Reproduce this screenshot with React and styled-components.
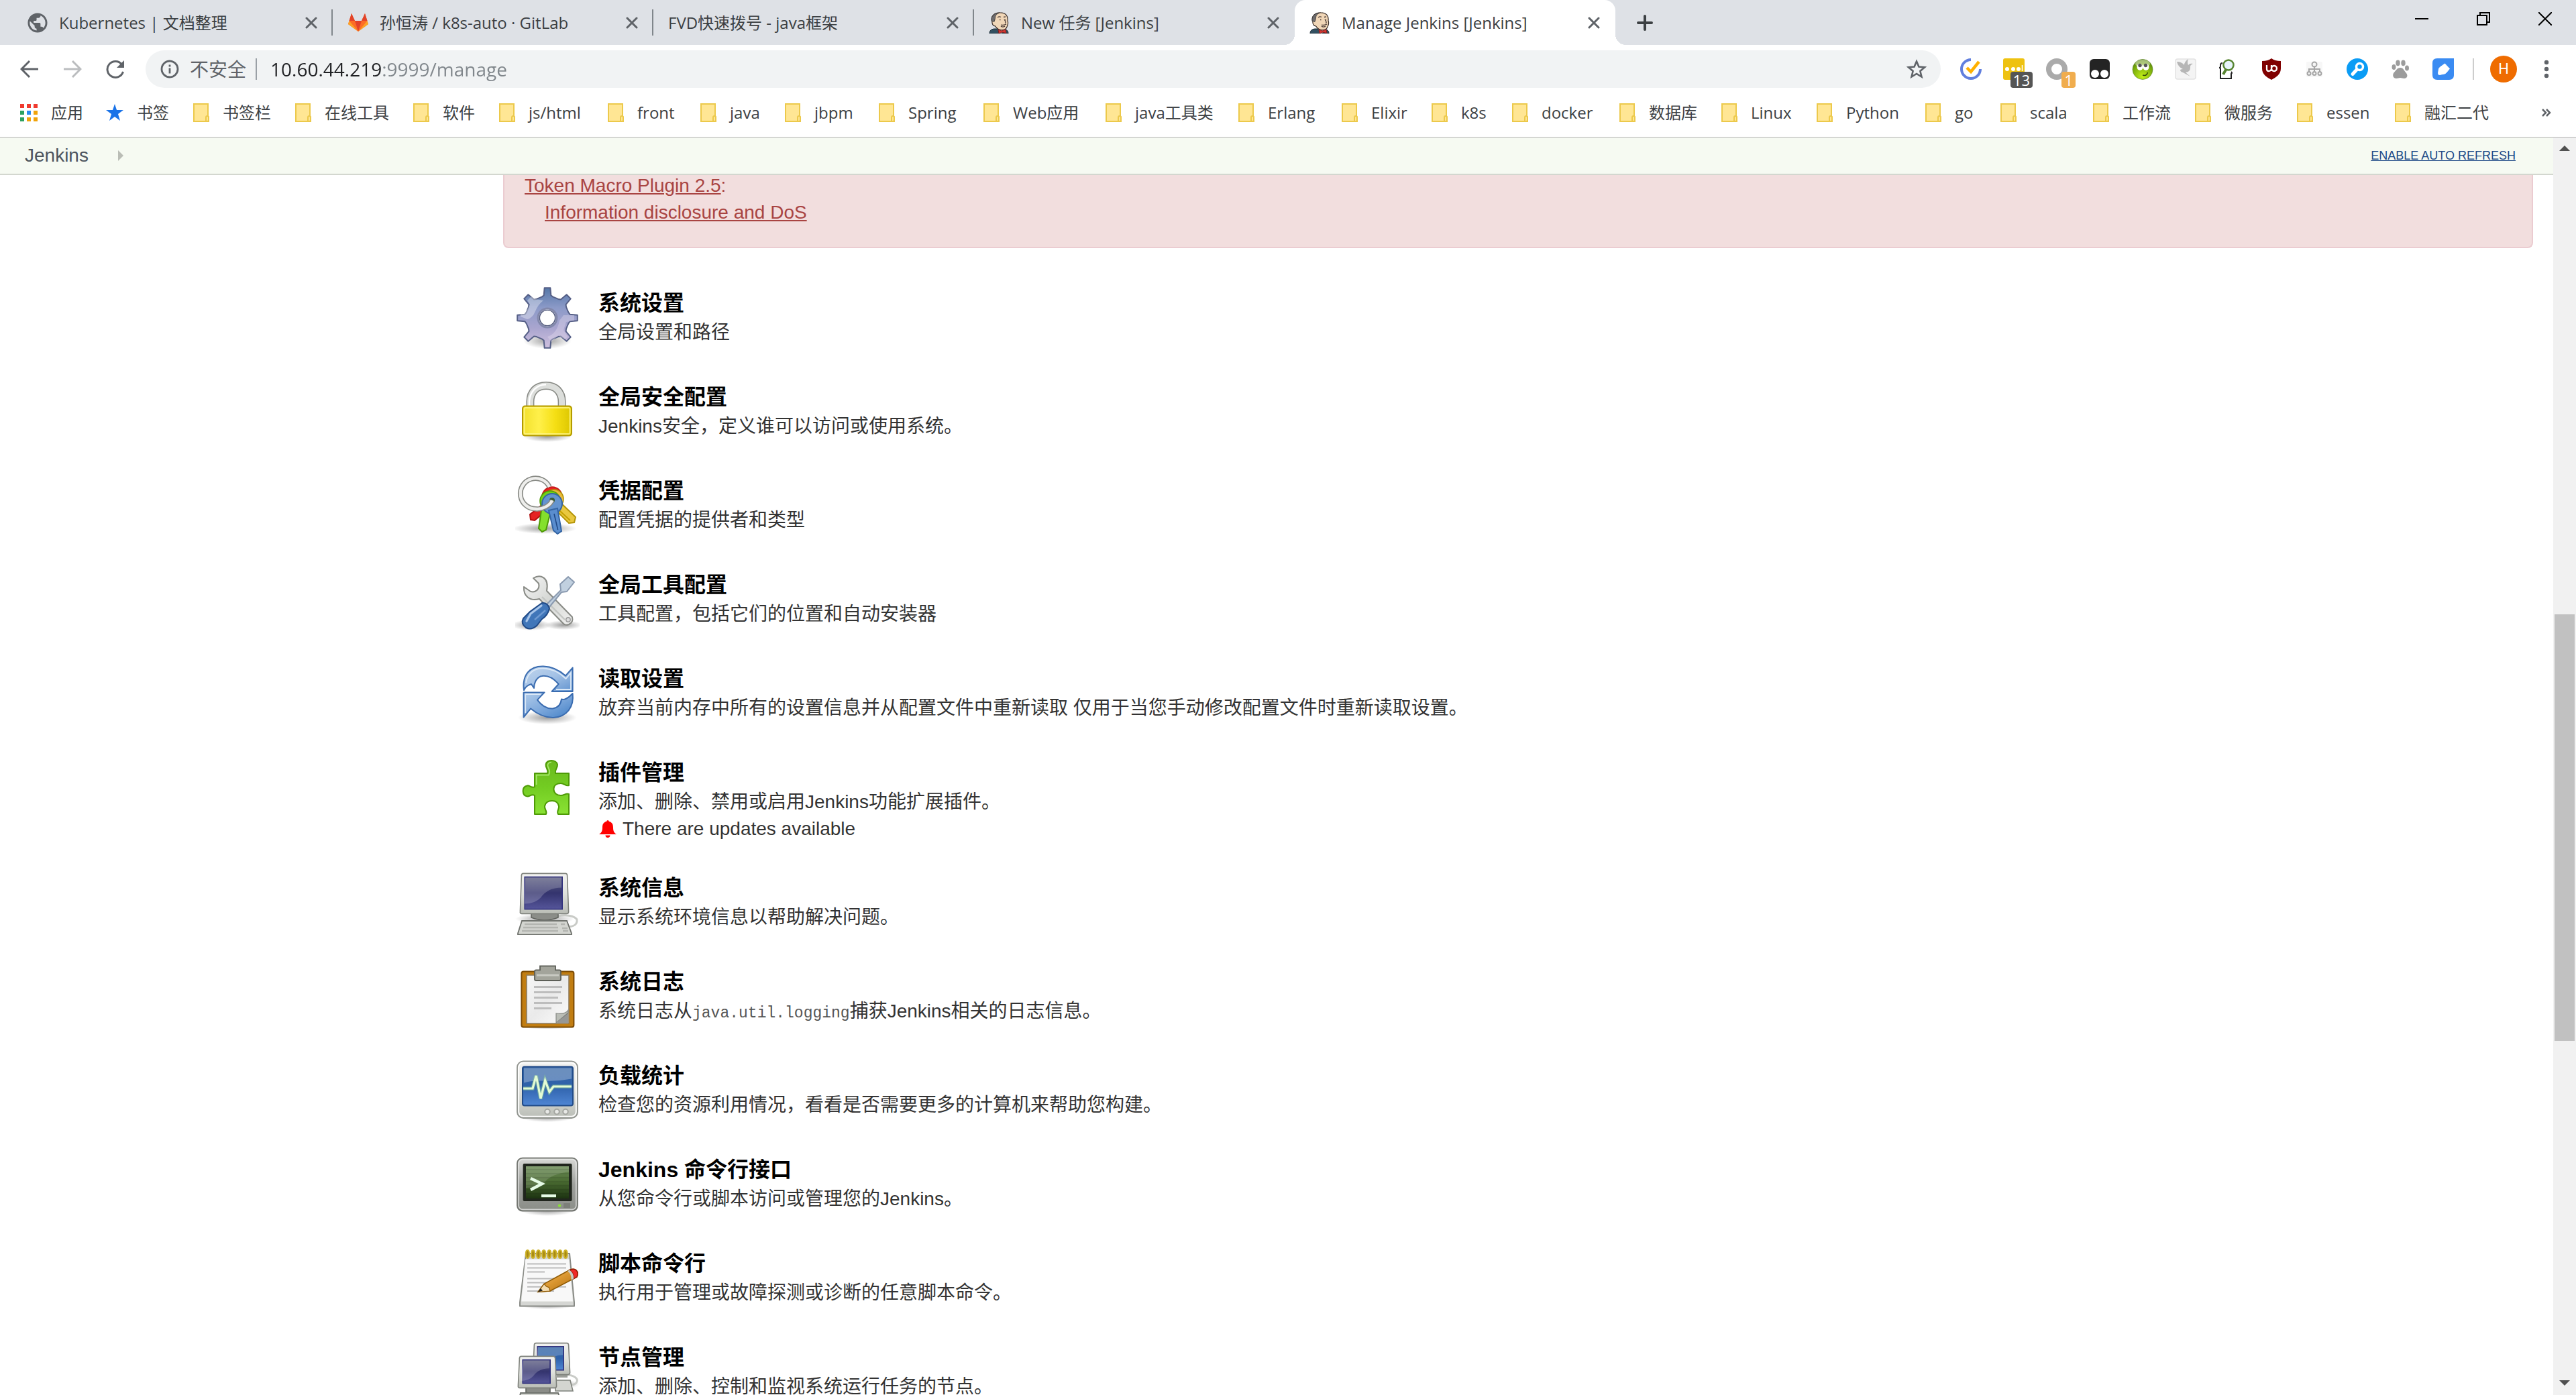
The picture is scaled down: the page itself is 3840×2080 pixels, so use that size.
import React from "react";
import styled, { createGlobalStyle } from "styled-components";

const uiFont = `"Open Sans", "Noto Sans", "Noto Sans CJK SC", sans-serif`;
const pageFont = `"Liberation Sans", "Noto Sans CJK SC", sans-serif`;

const GlobalStyle = createGlobalStyle`
  *, *::before, *::after { box-sizing: border-box; }
  body { margin: 0; background: #fff; overflow: hidden; }
  button { border: 0; padding: 0; margin: 0; background: none; font: inherit; color: inherit; cursor: pointer; }
  svg { display: block; flex: none; }
`;

const Browser = styled.div`
  display: flex;
  flex-direction: column;
  height: 100vh;
  font-family: ${uiFont};
  font-size: 24px;
  color: #3c4043;
`;

/* ---------- tab strip ---------- */
const TabStrip = styled.div`
  display: flex;
  flex: none;
  height: 67px;
  padding-left: 18px;
  background: #dee1e6;
`;

const Tab = styled.div`
  position: relative;
  display: flex;
  align-items: center;
  gap: 16px;
  width: 478px;
  padding: 0 16px 0 22px;
  background: ${(p) => (p.$active ? "#fff" : "transparent")};
  border-radius: ${(p) => (p.$active ? "16px 16px 0 0" : "0")};

  &::before {
    content: "";
    position: absolute;
    display: ${(p) => (p.$active ? "block" : "none")};
    left: -16px;
    right: -16px;
    bottom: 0;
    height: 16px;
    background:
      radial-gradient(circle at 0 0, transparent 16px, #fff 16px) left / 16px 16px no-repeat,
      radial-gradient(circle at 100% 0, transparent 16px, #fff 16px) right / 16px 16px no-repeat;
  }

  &::after {
    content: "";
    position: absolute;
    display: ${(p) => (p.$divider ? "block" : "none")};
    right: 0;
    top: 14px;
    width: 2px;
    height: 39px;
    background: #80868b;
  }
`;

const TabTitle = styled.button`
  flex: 1;
  text-align: left;
  line-height: 36px;
  white-space: nowrap;
`;

const IconButton = styled.button`
  display: flex;
  align-items: center;
  justify-content: center;
  flex: none;
  width: ${(p) => p.$w || 32}px;
  height: ${(p) => p.$h || 32}px;
`;

const NewTab = styled(IconButton)`
  align-self: center;
  margin-left: 12px;
`;

const WindowButtons = styled.div`
  display: flex;
  margin-left: auto;
`;

/* ---------- toolbar ---------- */
const Toolbar = styled.div`
  display: flex;
  align-items: center;
  flex: none;
  height: 72px;
  padding: 0 20px 0 12px;
`;

const NavButtons = styled.div`
  display: flex;
  width: 205px;
`;

const Omnibox = styled.div`
  display: flex;
  align-items: center;
  flex: 1;
  height: 56px;
  padding: 0 16px 0 22px;
  border-radius: 28px;
  background: #f1f3f4;
  font-size: 28px;
`;

const Security = styled.button`
  display: flex;
  align-items: center;
  gap: 16px;
  padding-right: 14px;
  margin-right: 20px;
  border-right: 2px solid #9aa0a6;
  line-height: 32px;
  color: #5f6368;
`;

const Address = styled.input`
  flex: 1;
  min-width: 0;
  border: 0;
  padding: 0;
  outline: 0;
  font: 28px/40px ${uiFont};
  color: transparent;
  background: linear-gradient(90deg, #202124 167px, #80868b 167px);
  background-clip: text;
  -webkit-background-clip: text;
`;

const Extensions = styled.div`
  display: flex;
  gap: 32px;
  margin-left: 29px;
  padding-right: 28px;
  border-right: 2px solid #cdcdcd;
`;

const Extension = styled(IconButton)`
  position: relative;
`;

const Badge = styled.span`
  position: absolute;
  top: 20px;
  right: -12px;
  padding: 0 4px;
  border-radius: 4px;
  background: ${(p) => p.$bg};
  color: #fff;
  font-size: 22px;
  line-height: 24px;
`;

const Avatar = styled.button`
  width: 40px;
  height: 40px;
  margin: 0 20px 0 24px;
  border-radius: 50%;
  background: #ef6c00;
  color: #fff;
  font: 22px/40px Roboto, sans-serif;
`;

/* ---------- bookmarks ---------- */
const Bookmarks = styled.nav`
  display: flex;
  align-items: center;
  flex: none;
  height: 66px;
  padding: 0 28px 8px 30px;
  border-bottom: 1px solid #b0b0b0;
`;

const Bookmark = styled.a`
  display: flex;
  align-items: center;
  gap: 20px;
  width: ${(p) => p.$w}px;
  line-height: 36px;
  color: inherit;
  text-decoration: none;
  white-space: nowrap;
`;

const MoreBookmarks = styled(IconButton)`
  margin-left: auto;
`;

/* ---------- page ---------- */
const Viewport = styled.div`
  display: flex;
  flex: 1;
  min-height: 0;
  font-family: ${pageFont};
  font-size: 28px;
  line-height: 40px;
  color: #333;
`;

const Page = styled.div`
  display: flex;
  flex-direction: column;
  flex: 1;
  min-width: 0;
  overflow: hidden;
`;

const Breadcrumbs = styled.header`
  display: flex;
  align-items: center;
  flex: none;
  height: 56px;
  padding: 0 56px 0 37px;
  background: #f6faf2;
  border-bottom: 2px solid #d3d7cf;
`;

const Crumb = styled.a`
  margin-right: 43px;
  color: #4d545d;
  text-decoration: none;
`;

const AutoRefresh = styled.a`
  margin-left: auto;
  color: #204a87;
  font-size: 18px;
`;

const Main = styled.main`
  flex: 1;
  min-height: 0;
  overflow: hidden;
  padding: 0 30px 0 750px;
`;

const Alert = styled.dl`
  margin: -4px 0 56px;
  padding: 0 30px 31px;
  border: 2px solid #ebccd1;
  border-top: 0;
  border-radius: 0 0 8px 8px;
  background: #f2dede;
  color: #a94442;

  dd { margin: 0 0 0 30px; }
  a { color: inherit; }
`;

const Items = styled.ul`
  margin: 0;
  padding: 0 0 0 18px;
  list-style: none;
`;

const Item = styled.li`
  display: flex;
  gap: 28px;
  padding-bottom: 42px;
`;

const ItemIcon = styled.div`
  height: 98px;
`;

const ItemText = styled.div`
  padding-top: 4px;
`;

const ItemTitle = styled.a`
  display: block;
  margin-bottom: 2px;
  font-size: 32px;
  font-weight: 700;
  line-height: 44px;
  color: #000;
  text-decoration: none;
`;

const ItemDesc = styled.div`
  line-height: 40px;
  white-space: nowrap;

  code { font: 23px "Liberation Mono", monospace; color: #555; }
`;

const Update = styled(ItemDesc)`
  display: flex;
  align-items: center;
  gap: 8px;
`;

/* ---------- scrollbar ---------- */
const Scrollbar = styled.div`
  display: grid;
  grid-template-rows: 34px 677fr 636fr 494fr 34px;
  justify-items: center;
  flex: none;
  width: 34px;
  background: #f1f1f1;
`;

const Thumb = styled.div`
  grid-row: 3;
  width: 30px;
  background: #c1c1c1;
`;

const ScrollArrow = styled(IconButton)`
  grid-row: ${(p) => p.$row};
`;

/* ================= small icons ================= */
const Close = () => (
  <svg width="18" height="18" viewBox="0 0 18 18" stroke="#5f6368" strokeWidth="3" strokeLinecap="round">
    <path d="M2 2L16 16M16 2L2 16" />
  </svg>
);

const Globe = () => (
  <svg width="32" height="32" viewBox="1 1 22 22">
    <path fill="#5f6368" d="M12 2C6.480 2 2 6.480 2 12s4.480 10 10 10 10-4.480 10-10S17.520 2 12 2zm-1 17.930c-3.950-.49-7-3.850-7-7.930 0-.62.08-1.210.21-1.790L9 15v1c0 1.100.9 2 2 2v1.930zm6.900-2.540c-.26-.81-1-1.390-1.900-1.390h-1v-3c0-.55-.45-1-1-1H8v-2h2c.55 0 1-.45 1-1V7h2c1.100 0 2-.9 2-2v-.41c2.930 1.190 5 4.060 5 7.410 0 2.080-.8 3.970-2.100 5.390z" />
  </svg>
);

const GitLab = () => (
  <svg width="32" height="32" viewBox="0 0 32 32">
    <path d="M16 29L1 18 6 2l5 11h10l5-11 5 16z" fill="#fc6d26" />
    <path d="M16 29L11 13h10z" fill="#e24329" />
    <path d="M16 29L1 18l1.500-5z M16 29l15-11-1.500-5z" fill="#fca326" />
    <path d="M2.500 13L6 2l5 11z M29.500 13L26 2l-5 11z" fill="#e24329" />
  </svg>
);

const Butler = () => (
  <svg width="32" height="32" viewBox="0 0 32 32">
    <path d="M1 32c0-4 2-6.500 7-7l14 0c5 1 7 3 7 7z" fill="#335061" stroke="#1a2a33" strokeWidth="1" />
    <path d="M13 25l5 7 7-7z" fill="#fff" />
    <path d="M5 14C2 6 9 .5 17 .8c8 0 12 5 11 12 1 3 .5 6-.5 8-1 4-5 6-9 6-5-.5-7-3-9-6-3 0-5-3-4.500-6.800z" fill="#f0d6b7" stroke="#3b2f2a" strokeWidth="1.200" />
    <path d="M4 13.500C3 6 8 1.500 15 1.500c-4 1.500-5.500 4-5.500 8l-1.500 5-2-1z" fill="#6d6b6d" stroke="#333" strokeWidth=".8" />
    <path d="M13 8c2-1.500 3.500-1.500 5-.5M22 7.500l3-.5M16 11.500h1.500M24.500 11v1.500M23 11c2 3 3 5 1 5.500M18 19c2.500 1 5 .5 8-1M18 21c2 1.500 4 1.500 6 0" fill="none" stroke="#4a3b35" strokeWidth="1.300" />
    <path d="M14 26l5 2 6-2 1 5.500-6-1.500-5 2z" fill="#d33833" stroke="#7e1512" strokeWidth=".8" />
  </svg>
);

const Plus = () => (
  <svg width="24" height="24" viewBox="0 0 24 24" stroke="#3c4043" strokeWidth="4" strokeLinecap="round">
    <path d="M12 2v20M2 12h20" />
  </svg>
);

const Minimize = () => (
  <svg width="20" height="20" viewBox="0 0 20 20" stroke="#000" strokeWidth="2"><path d="M0 10h20" /></svg>
);
const Restore = () => (
  <svg width="20" height="20" viewBox="0 0 20 20" fill="none" stroke="#000" strokeWidth="2">
    <path d="M1 5h14v14H1zM5 5V1h14v14h-4" />
  </svg>
);
const WinClose = () => (
  <svg width="20" height="20" viewBox="0 0 20 20" stroke="#000" strokeWidth="2"><path d="M0 0l20 20M20 0L0 20" /></svg>
);

const Arrow = ({ flip }) => (
  <svg width="28" height="28" viewBox="0 0 28 28" fill="none" stroke={flip ? "#bbbdbf" : "#5f6368"} strokeWidth="3">
    <path d={flip ? "M1 14h24M14 2l12 12-12 12" : "M27 14H3M14 2L2 14l12 12"} />
  </svg>
);

const Reload = () => (
  <svg width="28" height="28" viewBox="0 0 28 28">
    <path d="M23.500 7A12 12 0 1 0 25.500 18" fill="none" stroke="#5f6368" strokeWidth="3" />
    <path d="M27 1v11H16z" fill="#5f6368" />
  </svg>
);

const Info = () => (
  <svg width="28" height="28" viewBox="0 0 28 28" fill="none" stroke="#5f6368" strokeWidth="2.800">
    <circle cx="14" cy="14" r="12" />
    <path d="M14 12.500v8M14 7.500v3" />
  </svg>
);

const StarOutline = () => (
  <svg width="30" height="30" viewBox="0 0 30 30" fill="none" stroke="#5f6368" strokeWidth="2.600">
    <path d="M15 3.500l3.400 8.100 8.600.7-6.600 5.700 2.100 8.600-7.500-4.600-7.500 4.600 2.100-8.600L3 12.300l8.600-.7z" />
  </svg>
);

const Kebab = () => (
  <svg width="8" height="28" viewBox="0 0 8 28" fill="#5f6368">
    <circle cx="4" cy="4" r="3.200" /><circle cx="4" cy="14" r="3.200" /><circle cx="4" cy="24" r="3.200" />
  </svg>
);

const Apps = () => (
  <svg width="26" height="26" viewBox="0 0 26 26">
    {["#f03a2e", "#f03a2e", "#f03a2e", "#2da160", "#2a8cf0", "#f0a30a", "#2da160", "#f0a30a", "#f0a30a"].map((c, i) => (
      <rect key={i} x={(i % 3) * 10} y={Math.floor(i / 3) * 10} width="6" height="6" fill={c} />
    ))}
  </svg>
);

const BlueStar = () => (
  <svg width="26" height="26" viewBox="0 0 26 26">
    <path d="M13 0l3 9h10l-8 6 3 10-8-6-8 6 3-10-8-6h10z" fill="#1a73e8" />
  </svg>
);

const Folder = () => (
  <svg width="24" height="28" viewBox="0 0 24 28" fill="#ffe694" stroke="#ecc94b" strokeWidth="2">
    <path d="M1 1h21v18.500l1 1V27H1z" />
    <path d="M19 27v-6q0-2 2-2t2 2v4q0 2-2 2z" />
  </svg>
);

const Chevrons = () => (
  <svg width="14" height="12" viewBox="0 0 14 12" fill="none" stroke="#5f6368" strokeWidth="2.500">
    <path d="M1 1l5 5-5 5M7 1l5 5-5 5" />
  </svg>
);

const Bell = () => (
  <svg width="28" height="28" viewBox="0 0 28 28" fill="#f00">
    <path d="M14 1q1.500 0 1.800 1.800C21 4 22 8 22 12c0 6 2 8 5 10H1c3-2 5-4 5-10 0-4 1-8 6.200-9.200Q12.500 1 14 1z" />
    <path d="M10.500 23.500h7a3.500 3.500 0 0 1-7 0z" />
  </svg>
);

const Triangle = ({ d }) => (
  <svg width="16" height="8" viewBox="0 0 16 8" fill="#505050"><path d={d} /></svg>
);

/* ---------- extension icons ---------- */
const Ext = ({ children }) => <svg width="32" height="32" viewBox="0 0 32 32">{children}</svg>;

const extensions = [
  { name: "TickTick", icon: <Ext>
    <path d="M16 2a14 14 0 1 0 14 14" fill="none" stroke="#617fde" strokeWidth="4" />
    <path d="M10 14l6 6L28 5" fill="none" stroke="#ffb000" strokeWidth="4.500" />
  </Ext> },
  { name: "Notes", badge: "13", bg: "#555", icon: <Ext>
    <rect width="32" height="32" rx="3" fill="#eec211" />
    <circle cx="6" cy="16" r="3" fill="#fff" /><circle cx="15" cy="16" r="3" fill="#fff" /><circle cx="23" cy="16" r="3" fill="#fff" />
    <path d="M28.500 10v9" stroke="#fff" strokeWidth="1.500" />
  </Ext> },
  { name: "Ring", badge: "1", bg: "#f0ad4e", icon: <Ext><circle cx="16" cy="16" r="12" fill="none" stroke="#aaa" strokeWidth="8" /></Ext> },
  { name: "Tampermonkey", icon: <Ext>
    <rect x="1" y="1" width="30" height="30" rx="6" fill="#242424" />
    <circle cx="9" cy="23" r="6" fill="#fff" /><circle cx="23" cy="23" r="6" fill="#fff" />
  </Ext> },
  { name: "Smiley", icon: <Ext>
    <defs><radialGradient id="smile" cx=".5" cy=".85" r=".9"><stop offset="0" stopColor="#c4f01a" /><stop offset=".5" stopColor="#86b80e" /><stop offset="1" stopColor="#4d7a08" /></radialGradient></defs>
    <circle cx="16" cy="16.500" r="15" fill="url(#smile)" stroke="#557c22" strokeWidth=".6" />
    <ellipse cx="16" cy="8" rx="11" ry="6" fill="#fff" opacity=".45" />
    <ellipse cx="12" cy="13" rx="4.500" ry="5" fill="#fff" /><ellipse cx="21" cy="13" rx="4.500" ry="5" fill="#fff" />
    <circle cx="12" cy="10.500" r="2.700" fill="#555" /><circle cx="20.500" cy="10.500" r="2.700" fill="#555" />
    <path d="M16 25q6 2 7.500-4" fill="none" stroke="#33480a" strokeWidth="1.500" />
  </Ext> },
  { name: "Bird", icon: <Ext>
    <rect x="1" y="1" width="30" height="30" rx="3" fill="#f4f4f4" stroke="#e2e2e2" strokeWidth="1.500" />
    <path d="M3 5q7 0 11 5 0-5 6-9-2 6 0 9 2-3 7-2-5 2-4 6 0 6-7 7l7 6-11-6q-4-1-4-4 2-1 4-1-7-3-9-11z" fill="#b6b6b6" />
  </Ext> },
  { name: "Code search", icon: <Ext>
    <path d="M7 7q-3 0-3 3v2q0 2-2 2 2 0 2 2v14h16v-7q2-1 0-3" fill="none" stroke="#222" strokeWidth="2" />
    <circle cx="16" cy="10" r="7.500" fill="#e8f4fb" stroke="#568430" strokeWidth="2.500" />
    <path d="M12 17l-4 7" stroke="#568430" strokeWidth="4" />
  </Ext> },
  { name: "uBlock", icon: <Ext>
    <path d="M16 0q5 4 14 4v11c0 9-7 13-14 17C9 28 2 24 2 15V4q9 0 14-4z" fill="#800000" />
    <path d="M9 10v6q0 3 3 3t4-3v-6M16 15a4 4 0 1 1 0 .1" fill="none" stroke="#fff" strokeWidth="2.300" />
  </Ext> },
  { name: "Sitemap", icon: <Ext>
    <rect x="4" y="5" width="24" height="23" rx="2" fill="#f7f7f7" />
    <g fill="none" stroke="#a5a5a5" strokeWidth="2">
      <circle cx="16" cy="9" r="3.500" /><path d="M16 13v6M8 20v-4h16v4" />
      <circle cx="8" cy="22.500" r="2.500" /><circle cx="16" cy="22.500" r="2.500" /><circle cx="24" cy="22.500" r="2.500" />
    </g>
  </Ext> },
  { name: "Key", icon: <Ext>
    <circle cx="16" cy="16" r="16" fill="#0a9cf5" />
    <circle cx="19.500" cy="12.500" r="5" fill="none" stroke="#fff" strokeWidth="3.500" />
    <path d="M15 17l-6 6.500" stroke="#fff" strokeWidth="5" strokeLinecap="round" />
  </Ext> },
  { name: "Paw", icon: <Ext>
    <g fill="#9c9c9c">
      <ellipse cx="6.500" cy="13" rx="3" ry="4" /><ellipse cx="12.500" cy="7" rx="3.200" ry="4.400" />
      <ellipse cx="20.500" cy="7" rx="3.200" ry="4.400" /><ellipse cx="26" cy="14.500" rx="3" ry="4" />
      <path d="M16 14c5 0 6 5 9 8 3 4 1 8-3 8-3 0-4-1-6-1s-3 1-6 1c-4 0-6-4-4-8 3-3 5-8 10-8z" />
    </g>
  </Ext> },
  { name: "Tag", icon: <Ext>
    <path d="M7 0h25v25q0 7-7 7H7q-7 0-7-7V7q0-7 7-7z" fill="#3a8bf2" />
    <path d="M18.500 8l7 7.500-5 6q-1 1-2.500 1.500l-7.500 1.500q-2 0-2-2l1-7q.5-1.500 2-2.500z" fill="#fff" stroke="#fff" strokeLinejoin="round" />
  </Ext> },
];

/* ================= 48px page icons ================= */
const Art = ({ children }) => <svg width="96" height="96" viewBox="0 0 48 48">{children}</svg>;
const Shadow = ({ cx = 24, cy = 43, rx = 20, ry = 4 }) => (
  <ellipse cx={cx} cy={cy} rx={rx} ry={ry} fill="url(#shadow)" />
);
const Stops = ({ colors }) => colors.map((c, i) => <stop key={i} offset={i / (colors.length - 1)} stopColor={c} />);

const HiddenDefs = styled.svg`
  position: absolute;
`;

const Defs = () => (
  <HiddenDefs width="0" height="0" aria-hidden="true">
    <defs>
      <radialGradient id="shadow"><stop offset="0" stopColor="#000" stopOpacity=".38" /><stop offset="1" stopColor="#000" stopOpacity="0" /></radialGradient>
      <linearGradient id="gear" x1="0" y1="0" x2="0" y2="1"><Stops colors={["#5577a8", "#8c9ac8", "#a9a5cf", "#cfc0de"]} /></linearGradient>
      <linearGradient id="gold" x1="0" y1="0" x2="1" y2="0"><Stops colors={["#f2e02c", "#fff04a", "#f5df14", "#dcc600"]} /></linearGradient>
      <linearGradient id="steel" x1="0" y1="0" x2="1" y2="1"><Stops colors={["#f6f6f6", "#d5d7d4", "#f1f1f0"]} /></linearGradient>
      <linearGradient id="case" x1="0" y1="0" x2="0" y2="1"><Stops colors={["#f2f2f0", "#dfe1dc", "#babdb6"]} /></linearGradient>
      <linearGradient id="darkcase" x1="0" y1="0" x2="0" y2="1"><Stops colors={["#d8d9d6", "#9fa19d", "#8a8d87"]} /></linearGradient>
      <linearGradient id="navy" x1="0" y1="0" x2="0" y2="1"><Stops colors={["#5e6082", "#34346e", "#55559a"]} /></linearGradient>
      <linearGradient id="sky" x1="0" y1="0" x2="0" y2="1"><Stops colors={["#3465a4", "#2f62ab", "#4f86d4"]} /></linearGradient>
      <linearGradient id="arrowTop" x1="0" y1="0" x2="1" y2="1"><Stops colors={["#c0d5ec", "#a4c2e6", "#6193cf"]} /></linearGradient>
      <linearGradient id="arrowLow" x1="0" y1="0" x2="1" y2="1"><Stops colors={["#b3cdea", "#7fa9dc", "#4280c6"]} /></linearGradient>
      <linearGradient id="leaf" x1="0" y1="0" x2="0" y2="1"><Stops colors={["#6ab81d", "#73cc22", "#8ae234"]} /></linearGradient>
      <linearGradient id="term" x1="0" y1="0" x2="0" y2="1"><Stops colors={["#6f8f5a", "#47682f", "#1c3311"]} /></linearGradient>
      <linearGradient id="paper" x1="0" y1="0" x2="1" y2="1"><Stops colors={["#f6f6f6", "#eaeaea", "#fbfbfb"]} /></linearGradient>
      <linearGradient id="pencil" x1="0" y1="0" x2="1" y2="1"><Stops colors={["#f8c675", "#d9952e", "#a86a12"]} /></linearGradient>
    </defs>
  </HiddenDefs>
);

const gearPath = (() => {
  const tooth = [[16.200, -15], [17, -9], [22.500, -5.500], [22.500, 5.500], [17, 9], [16.200, 15]];
  const pts = [];
  for (let i = 0; i < 8; i++) {
    tooth.forEach(([r, a]) => {
      const t = ((i * 45 + a) * Math.PI) / 180;
      pts.push(`${(24 + r * Math.cos(t)).toFixed(2)} ${(24 + r * Math.sin(t)).toFixed(2)}`);
    });
  }
  return `M${pts.join("L")}Z`;
})();

const GearArt = () => (
  <Art>
    <Shadow cy={41} rx={18} ry={6} />
    <path d={`${gearPath}M24 17.500a6.500 6.500 0 1 0 .01 0z`} fillRule="evenodd" fill="url(#gear)" stroke="#555f86" strokeWidth="1" strokeLinejoin="round" />
    <path d="M9 25q4-1 6-6t6-8l-6-1-3-2-3 3 2 3-2 4-5 1v4z" fill="#fff" opacity=".35" />
    <path d="M33 26q-2 10-9 12l3 4 5-5 5 3 2-2-3-5 2-6 6-1v-4h-8z" fill="#e8e0f2" opacity=".35" />
    <circle cx="24" cy="24" r="7" fill="#fff" stroke="#8288ab" strokeWidth="1.500" />
    <circle cx="24" cy="24" r="5.800" fill="#fff" stroke="#4c5478" strokeWidth=".7" />
  </Art>
);

const LockArt = () => (
  <Art>
    <Shadow cy={42.500} rx={18} />
    <path d="M11.200 21v-4.500C11.200 9 16 4.500 23 4.500S34.800 9 34.800 16.500V21" fill="none" stroke="#888a85" strokeWidth="6" />
    <path d="M11.200 21v-4.500C11.200 9 16 4.500 23 4.500S34.800 9 34.800 16.500V21" fill="none" stroke="#dcdedb" strokeWidth="4.500" />
    <path d="M10.500 20v-4C11 9 16 3.700 23 3.700" fill="none" stroke="#fff" strokeWidth="1.200" />
    <rect x="5.500" y="19.800" width="36.500" height="22" rx="1.800" fill="url(#gold)" stroke="#b39a00" strokeWidth="1" />
    <rect x="6.800" y="21" width="34" height="19.500" rx="1" fill="none" stroke="#fff68a" strokeWidth="1" opacity=".8" />
  </Art>
);

const KeysArt = () => (
  <Art>
    <Shadow cx={22} cy={41} rx={24} />
    <path d="M23 21l-12 9.500.5 4 3 .5 12-10z" fill="#e62222" stroke="#b11010" />
    <path d="M32 20l13 12.500-1 4-4 .5-12-12z" fill="#e9c840" stroke="#b49508" />
    <path d="M28 23l13 12" stroke="#c4a000" strokeWidth="1" />
    <circle cx="27.500" cy="17.500" r="7.500" fill="#e62222" stroke="#c01818" strokeWidth=".8" />
    <circle cx="29" cy="19" r="7" fill="#e9b93b" stroke="#b49508" strokeWidth=".8" />
    <path d="M20 24l-2.500 17 2.500 2.500 3-1.500 4-16z" fill="#84e02c" stroke="#4e9a06" />
    <circle cx="26" cy="20.500" r="7.500" fill="#73d216" stroke="#4e9a06" strokeWidth=".8" />
    <circle cx="27.500" cy="22.500" r="7.500" fill="#6494cf" stroke="#3465a4" />
    <path d="M25 27.500l3.500 15 3 2.500 3-2-3-17z" fill="#5a8dce" stroke="#3465a4" />
    <path d="M29 30l2.800 12" stroke="#204a87" strokeWidth=".8" />
    <circle cx="27.500" cy="20" r="2" fill="#3a5c36" />
    <path d="M27.500 20C26 24 20 27 15.200 26.400A11.400 11.400 0 1 1 25.500 10" fill="none" stroke="#888a85" strokeWidth="3.800" />
    <path d="M27.500 20C26 24 20 27 15.200 26.400A11.400 11.400 0 1 1 25.500 10" fill="none" stroke="#eeeeec" strokeWidth="2.200" />
  </Art>
);

const ToolsArt = () => (
  <Art>
    <Shadow cx={12} cy={43} rx={15} /><Shadow cx={36} cy={43} rx={14} ry={3.500} />
    <path d="M13.500 8c5-3 12-1 10 9.500L42.500 37q1 4-2.500 5.500-2.500 1-4-.5L18 23.500c-7 2-12-2-11.500-9l5 3.500c4 1 7-2 6-6z" fill="url(#steel)" stroke="#888a85" strokeLinejoin="round" />
    <circle cx="39.500" cy="39" r="1.600" fill="#ddd" stroke="#999" strokeWidth=".7" />
    <path d="M20 22l17 17" stroke="#c4c6c3" strokeWidth="1.200" />
    <path d="M23.500 27.500L34 17l-.5-4.500 6-5.500 4.500 4-5.500 7-4 .5L25.500 29.500z" fill="#c1d0df" stroke="#8a9ab0" strokeLinejoin="round" />
    <path d="M20 26.500q4-.5 5.500 4-1 5-5.500 8l-4 5q-4 3.500-8 1.500-4-3-2-7l5-5z" fill="#4076b9" stroke="#204a87" />
    <path d="M19.500 28.500l-8 6-3 5.500" fill="none" stroke="#a9c6ea" strokeWidth="1.600" strokeLinecap="round" />
    <path d="M22.500 32l-8 7" fill="none" stroke="#6f9ad2" strokeWidth="1.200" />
  </Art>
);

const RefreshArt = () => (
  <Art>
    <Shadow cx={24} cy={42} rx={22} ry={5} />
    <path d="M6.500 21.500C5 10 11 3.500 21 3.800c7 .2 12 3 16.500 7l5.300-6v17.700H27.300l5-5.500C28 12 24 10.500 20 11c-3 .2-6 4-6 9l-2-3q-4 1-5.500 4.500z" fill="url(#arrowTop)" stroke="#3a6cb0" strokeLinejoin="round" />
    <path d="M8 16C9 9 14 5 21 5.300c7 .2 12 3 16.800 7.700l3.700-4.500V21H30.500" fill="none" stroke="#dce9f7" strokeWidth=".9" />
    <path d="M42.800 24C44 34 38.500 41.500 28.500 42c-7 .2-12.500-3-17-6.700l-5.200 6.400V23.200h15.500l-5.300 5.600C20 33.500 24 35.500 28 35.200c4-.5 6-3 6.500-7 1.500 1 5-.5 8.300-4.200z" fill="url(#arrowLow)" stroke="#3a6cb0" strokeLinejoin="round" />
    <path d="M7.600 38.500v-14h11.500" fill="none" stroke="#dce9f7" strokeWidth=".9" />
  </Art>
);

const PuzzleArt = () => (
  <Art>
    <path d="M14.500 13.500H24c1-3-1.500-4-1.200-6.500.3-2 2-3 4.200-3s4.200 1 4.500 3c.2 2.500-2 3.500-1.500 6.500h10v9c-2 1-3.500-1.500-6-1.500-3 0-5.300 1.500-5.300 4.300S31 30 34 30c2.500 0 4-2 6-1v15h-8c-1.500-2.500 1-3.500.5-6-.5-2.500-2-4-5-4s-5 1.500-5.500 4c-.3 2.500 2 3.500 1 6h-8.500V30c-2.500-1.500-3.500 1-5.500.7-2-.3-3.200-1.700-3.200-4s1.200-3.700 3.200-4c2-.3 3 2 5.500 1z" fill="url(#leaf)" stroke="#4e9a06" strokeLinejoin="round" />
    <path d="M15.800 22v-7.200H25c2-4-1-5-.8-7.500.3-1.300 1.500-2 2.800-2" fill="none" stroke="#a6e86a" strokeWidth=".9" />
  </Art>
);

const Monitor = ({ x, y, w, h, screen }) => (
  <g>
    <path d={`M${x + 1.500} ${y}h${w - 3}q1.200 0 1.300 1.500l1 ${h - 3}q0 1.500-1.500 1.500H${x + 0.500}q-1.500 0-1.300-1.500l1-${h - 3}q0-1.500 1.300-1.500z`} fill="url(#case)" stroke="#7f827c" strokeWidth=".8" />
    <rect x={x + 2.600} y={y + 2.600} width={w - 6.500} height={h - 6} fill={`url(#${screen})`} stroke="#33337e" strokeWidth=".8" />
    <path d={`M${x + 3} ${y + 3}h${w - 7.500}v${h * 0.25}q-${w * 0.3} 0-${w * 0.45} ${h * 0.25}q-${w * 0.12} ${h * 0.15}-${w * 0.35} ${h * 0.15}z`} fill="#fff" opacity=".2" />
  </g>
);

const ComputerArt = () => (
  <Art>
    <Shadow cx={22} cy={36} rx={22} />
    <path d="M32 34c8-2 15 1 14 4-.5 3-4 4-7 4" fill="none" stroke="#c9cbc7" strokeWidth="1.500" />
    <path d="M12 32h20v3q-10 4-20 0z" fill="#8b8d88" stroke="#62645f" strokeWidth=".8" />
    <Monitor x={4.500} y={2.200} w={34.500} h={30} screen="navy" />
    <path d="M5 37.500h33.500l3.500 9.300v1H2v-1z" fill="#d3d5d0" stroke="#70736e" strokeWidth=".9" />
    <path d="M7 40h24M6 42.500h26M5 45h27M34 40h3M35 43h4M35.500 45h4" stroke="#b3b5b0" strokeWidth="1.300" />
  </Art>
);

const ClipboardArt = () => (
  <Art>
    <Shadow cy={46} rx={20} ry={2.500} />
    <rect x="4.700" y="5.200" width="39" height="41.500" rx="1.500" fill="#c17d11" stroke="#7b4a04" />
    <path d="M8.500 8h31.500v36h-31.500z" fill="url(#paper)" stroke="#8d7b5c" strokeWidth=".8" />
    <path d="M30.500 43.500v-7q7 1 9-2.500v2z" fill="#babdb6" stroke="#888a85" strokeWidth=".6" />
    <path d="M31 43.500L39.500 36v7.500z" fill="#555753" opacity=".6" />
    <path d="M14 16.800h21M14 20.800h20M14 24.800h18M14 28.800h21M14 32.800h13" stroke="#bdbdbd" strokeWidth="1.500" />
    <path d="M18.500 1.200h11.500v3h3q1 0 1 1V11q0 1-1 1H15.500q-1 0-1-1V5.200q0-1 1-1h3z" fill="#a3a49b" stroke="#5c5e57" strokeWidth=".9" />
    <path d="M16 8h16.500" stroke="#c8c9c2" strokeWidth="1.500" />
  </Art>
);

const LoadArt = () => (
  <Art>
    <Shadow cy={44} rx={20} ry={3.500} />
    <rect x="1.500" y="2.200" width="45" height="42.300" rx="4.500" fill="url(#case)" stroke="#90938e" strokeWidth=".9" />
    <rect x="2.600" y="3.300" width="42.800" height="40" rx="3.500" fill="none" stroke="#fff" strokeWidth=".9" />
    <rect x="5.500" y="6.300" width="37.500" height="29" rx="1.500" fill="url(#sky)" stroke="#204a87" />
    <path d="M6.500 7.300h35.500v8q-10 2-20 1.500t-15.500 1.500z" fill="#fff" opacity=".28" />
    <path d="M6 22.500h7l2.600-9.500L19 30l3.300-13.500 3.200 8.500 3-4H42" fill="none" stroke="#8fd08f" strokeWidth="2.800" opacity=".5" />
    <path d="M6 22.500h7l2.600-9.500L19 30l3.300-13.500 3.200 8.500 3-4H42" fill="none" stroke="#e4fbd4" strokeWidth="1.600" />
    {[24, 31, 37.500].map((x) => <circle key={x} cx={x} cy="39.800" r="1.900" fill="#e8e9e6" stroke="#a4a6a1" />)}
  </Art>
);

const TerminalArt = () => (
  <Art>
    <Shadow cy={43.500} rx={20} ry={4} />
    <rect x="1.500" y="4.300" width="45" height="39.500" rx="4" fill="url(#darkcase)" stroke="#70736e" strokeWidth=".9" />
    <rect x="2.600" y="5.400" width="42.800" height="37.300" rx="3" fill="none" stroke="#eee" strokeWidth=".8" opacity=".7" />
    <rect x="5.800" y="8.500" width="36.500" height="28" rx="1" fill="#20251d" />
    <rect x="8" y="10.500" width="32" height="24" fill="url(#term)" />
    <path d="M8 10.500h32v4q-14 2-18 8-5 4-14 4z" fill="#fff" opacity=".14" />
    <path d="M8 13h32M8 16h32M8 19h32M8 22h32M8 25h32M8 28h32M8 31h32" stroke="#000" strokeWidth=".6" opacity=".18" />
    <path d="M11.500 19.500l8.500 4-8.500 4.500" fill="none" stroke="#e6fbe6" strokeWidth="2.200" />
    <path d="M19.500 32.500h11" stroke="#e6fbe6" strokeWidth="2.200" />
    <circle cx="33" cy="39.800" r="1.100" fill="#8ae234" />
    <rect x="36" y="38" width="5" height="3.500" fill="#7c7f79" />
  </Art>
);

const NotepadArt = () => (
  <Art>
    <Shadow cy={44.500} rx={20} ry={2.500} />
    <path d="M8 5.500h32.500L44 42v2.800H3.500V42z" fill="#d5d6d3" stroke="#888a85" strokeLinejoin="round" />
    <path d="M7.500 9.800h32.800l2.700 31.500H4.600z" fill="#f8f8f8" />
    {[0, 1, 2, 3, 4, 5, 6, 7].map((i) => (
      <ellipse key={i} cx={9.200 + i * 4.050} cy="6" rx="1.300" ry="3" fill="#a88a14" stroke="#cdb227" strokeWidth="1" />
    ))}
    <path d="M9 13.200h29M9 16.300h29M9 19.300h13M9 24.300h27M9 27.300h22M9 30.400h29M9 33.500h20" stroke="#bcbcbc" strokeWidth="1" />
    <path d="M17 34.200l4.500-6L41 17.500q3-1 4.500.5 2 2 .5 5L26 33.500z" fill="url(#pencil)" stroke="#8f5902" strokeWidth=".8" />
    <path d="M17 34.200l4.500-6 1.700 1.800 2 .8.800 2.700z" fill="#f3dcb0" stroke="#8f5902" strokeWidth=".6" />
    <path d="M17 34.200l2-2.700 1.500 1.700z" fill="#222" />
    <path d="M40.500 17.800q3.500-1.500 5 .2 2 2 .5 5l-2.500 1.400q.5-4-3-6.600z" fill="#ef2929" stroke="#8f1a02" strokeWidth=".7" />
    <path d="M39 18.600l1.500-.8q3.500 2.600 3 6.600l-1.700.9q.3-4.500-2.800-6.700z" fill="#c9cbc7" />
  </Art>
);

const NodesArt = () => (
  <Art>
    <Shadow cx={30} cy={33} rx={18} />
    <path d="M38 26c6 0 9 3 8 5-1 3-4 2-6 3" fill="none" stroke="#c9cbc7" strokeWidth="1.500" />
    <path d="M30 30h11l2 8H30z" fill="#d3d5d0" stroke="#7f827c" strokeWidth=".8" />
    <path d="M31 25h8v3h-8z" fill="#9c9e99" />
    <Monitor x={14} y={2.300} w={26} h={23.500} screen="sky" />
    <path d="M8 35h18v4q-9 3-18 0z" fill="#8b8d88" stroke="#62645f" strokeWidth=".8" />
    <Monitor x={3} y={12.200} w={27} h={23.500} screen="navy" />
    <path d="M4 39.500h28l3 8H2z" fill="#d3d5d0" stroke="#70736e" strokeWidth=".9" />
  </Art>
);

/* ================= data ================= */
const tabs = [
  { title: "Kubernetes | 文档整理", icon: <Globe />, divider: true },
  { title: "孙恒涛 / k8s-auto · GitLab", icon: <GitLab />, divider: true },
  { title: "FVD快速拨号 - java框架", divider: true },
  { title: "New 任务 [Jenkins]", icon: <Butler /> },
  { title: "Manage Jenkins [Jenkins]", icon: <Butler />, active: true },
];

const bookmarks = [
  ["应用", 128, <Apps />], ["书签", 130, <BlueStar />], ["书签栏", 152], ["在线工具", 176], ["软件", 128],
  ["js/html", 162], ["front", 138], ["java", 126], ["jbpm", 140], ["Spring", 156], ["Web应用", 182],
  ["java工具类", 198], ["Erlang", 154], ["Elixir", 134], ["k8s", 120], ["docker", 160], ["数据库", 152],
  ["Linux", 142], ["Python", 162], ["go", 112], ["scala", 138], ["工作流", 152], ["微服务", 152],
  ["essen", 146], ["融汇二代", 176],
];

const items = [
  { art: <GearArt />, title: "系统设置", desc: "全局设置和路径" },
  { art: <LockArt />, title: "全局安全配置", desc: "Jenkins安全，定义谁可以访问或使用系统。" },
  { art: <KeysArt />, title: "凭据配置", desc: "配置凭据的提供者和类型" },
  { art: <ToolsArt />, title: "全局工具配置", desc: "工具配置，包括它们的位置和自动安装器" },
  { art: <RefreshArt />, title: "读取设置", desc: "放弃当前内存中所有的设置信息并从配置文件中重新读取 仅用于当您手动修改配置文件时重新读取设置。" },
  { art: <PuzzleArt />, title: "插件管理", desc: "添加、删除、禁用或启用Jenkins功能扩展插件。", update: "There are updates available" },
  { art: <ComputerArt />, title: "系统信息", desc: "显示系统环境信息以帮助解决问题。" },
  { art: <ClipboardArt />, title: "系统日志", desc: <>系统日志从<code>java.util.logging</code>捕获Jenkins相关的日志信息。</> },
  { art: <LoadArt />, title: "负载统计", desc: "检查您的资源利用情况，看看是否需要更多的计算机来帮助您构建。" },
  { art: <TerminalArt />, title: "Jenkins 命令行接口", desc: "从您命令行或脚本访问或管理您的Jenkins。" },
  { art: <NotepadArt />, title: "脚本命令行", desc: "执行用于管理或故障探测或诊断的任意脚本命令。" },
  { art: <NodesArt />, title: "节点管理", desc: "添加、删除、控制和监视系统运行任务的节点。" },
];

export default function App() {
  return (
    <Browser>
      <GlobalStyle />
      <Defs />
      <TabStrip>
        {tabs.map((t) => (
          <Tab key={t.title} $active={t.active} $divider={t.divider}>
            {t.icon}
            <TabTitle>{t.title}</TabTitle>
            <IconButton aria-label="Close tab"><Close /></IconButton>
          </Tab>
        ))}
        <NewTab aria-label="New tab" $w={64} $h={40}><Plus /></NewTab>
        <WindowButtons>
          <IconButton aria-label="Minimize" $w={92} $h={56}><Minimize /></IconButton>
          <IconButton aria-label="Restore" $w={92} $h={56}><Restore /></IconButton>
          <IconButton aria-label="Close window" $w={92} $h={56}><WinClose /></IconButton>
        </WindowButtons>
      </TabStrip>

      <Toolbar>
        <NavButtons>
          <IconButton aria-label="Back" $w={64} $h={56}><Arrow /></IconButton>
          <IconButton aria-label="Forward" $w={64} $h={56}><Arrow flip /></IconButton>
          <IconButton aria-label="Reload" $w={64} $h={56}><Reload /></IconButton>
        </NavButtons>
        <Omnibox>
          <Security><Info />不安全</Security>
          <Address aria-label="Address" defaultValue="10.60.44.219:9999/manage" />
          <IconButton aria-label="Bookmark this page" $w={40} $h={40}><StarOutline /></IconButton>
        </Omnibox>
        <Extensions>
          {extensions.map((e) => (
            <Extension key={e.name} aria-label={e.name}>
              {e.icon}
              {e.badge && <Badge $bg={e.bg}>{e.badge}</Badge>}
            </Extension>
          ))}
        </Extensions>
        <Avatar>H</Avatar>
        <IconButton aria-label="Menu" $w={48} $h={40}><Kebab /></IconButton>
      </Toolbar>

      <Bookmarks>
        {bookmarks.map(([label, width, icon]) => (
          <Bookmark key={label} href="#" $w={width}>{icon || <Folder />}{label}</Bookmark>
        ))}
        <MoreBookmarks aria-label="More bookmarks"><Chevrons /></MoreBookmarks>
      </Bookmarks>

      <Viewport>
        <Page>
          <Breadcrumbs>
            <Crumb href="#">Jenkins</Crumb>
            <svg width="10" height="16" viewBox="0 0 10 16" fill="#babdb6"><path d="M1 0l8 8-8 8z" /></svg>
            <AutoRefresh href="#">ENABLE AUTO REFRESH</AutoRefresh>
          </Breadcrumbs>
          <Main>
            <Alert>
              <dt><a href="#">Token Macro Plugin 2.5</a>:</dt>
              <dd><a href="#">Information disclosure and DoS</a></dd>
            </Alert>
            <Items>
              {items.map((it) => (
                <Item key={it.title}>
                  <ItemIcon>{it.art}</ItemIcon>
                  <ItemText>
                    <ItemTitle href="#">{it.title}</ItemTitle>
                    <ItemDesc>{it.desc}</ItemDesc>
                    {it.update && <Update><Bell />{it.update}</Update>}
                  </ItemText>
                </Item>
              ))}
            </Items>
          </Main>
        </Page>
        <Scrollbar>
          <ScrollArrow aria-label="Scroll up" $row={1}><Triangle d="M0 8l8-8 8 8z" /></ScrollArrow>
          <Thumb />
          <ScrollArrow aria-label="Scroll down" $row={5}><Triangle d="M0 0l8 8 8-8z" /></ScrollArrow>
        </Scrollbar>
      </Viewport>
    </Browser>
  );
}
